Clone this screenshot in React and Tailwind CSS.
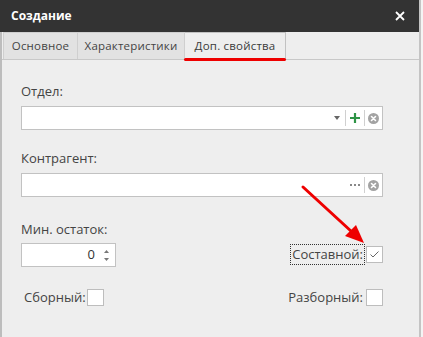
import React from 'react';

const ClearIcon = () => (
  <svg width="11" height="11" viewBox="0 0 11 11">
    <circle cx="5.5" cy="5.5" r="5.5" fill="#a3a3a3" />
    <path d="M3.5 3.5 L7.5 7.5 M7.5 3.5 L3.5 7.5" stroke="#fff" strokeWidth="1.6" strokeLinecap="round" />
  </svg>
);

const Checkbox = ({ checked }) => (
  <div className="w-[17px] h-[17px] bg-white border border-[#bdbdbd] flex items-center justify-center">
    {checked && (
      <svg width="11" height="9" viewBox="0 0 11 9">
        <path d="M1.5 4.5 L4 7 L9.5 1.5" fill="none" stroke="#666" strokeWidth="1" />
      </svg>
    )}
  </div>
);

export default function App() {
  return (
    <div className="relative w-[423px] h-[337px] overflow-hidden bg-[#f4f4f4] flex text-[13px] text-[#444]" style={{ fontFamily: '"Open Sans", "Noto Sans", sans-serif' }}>
      <div className="w-[421px] h-full flex flex-col border-r-2 border-[#c4c4c4]">
        <div className="h-[32px] shrink-0 bg-[#333333] flex items-center justify-between pl-[11px] pr-[14px]">
          <span className="text-white font-bold text-[12px]">Создание</span>
          <svg width="10" height="10" viewBox="0 0 10 10">
            <path d="M1 1 L9 9 M9 1 L1 9" stroke="#fff" strokeWidth="1.8" />
          </svg>
        </div>
        <div className="flex-1 flex flex-col bg-[#eeeeee] border-l-2 border-[#bdbdbd]">
          <div className="h-[28px] shrink-0 flex items-end pl-px pt-px border-b border-[#c8c8c8] text-[11.5px] tracking-[0.2px]">
            <div className="h-[27px] w-[75px] flex items-center justify-center bg-[#e2e2e2] border border-b-0 border-[#cfcfcf]">Основное</div>
            <div className="h-[27px] w-[107px] flex items-center justify-center bg-[#e2e2e2] border border-b-0 border-l-0 border-[#cfcfcf]">Характеристики</div>
            <div className="relative h-[27px] w-[101px] flex items-center justify-center bg-[#eeeeee] border border-b-0 border-l-0 border-[#c2c2c2] text-[#3a3a3a]">
              Доп. свойства
              <div className="absolute left-[-1px] right-[-1px] bottom-[-2px] h-[3px] bg-[#ee0000] rounded-sm" />
            </div>
          </div>
          <div className="flex-1 flex flex-col pl-[19px] pr-[36px]">
            <div className="mt-[22px] h-[18px] leading-[18px]">Отдел:</div>
            <div className="mt-[6px] h-[24px] bg-white border border-[#c2c2c2] flex items-center justify-end">
              <svg width="6" height="4" viewBox="0 0 6 4" className="mr-[5px]"><path d="M0 0 H6 L3 4 Z" fill="#666" /></svg>
              <div className="w-px h-[16px] bg-[#d0d0d0]" />
              <svg width="10" height="10" viewBox="0 0 10 10" className="mx-[4px]"><path d="M5 0 V10 M0 5 H10" stroke="#2e9446" strokeWidth="2.2" /></svg>
              <div className="w-px h-[16px] bg-[#d0d0d0]" />
              <div className="mx-[3px] flex"><ClearIcon /></div>
            </div>
            <div className="mt-[19px] h-[18px] leading-[18px]">Контрагент:</div>
            <div className="mt-[6px] h-[24px] bg-white border border-[#c2c2c2] flex items-center justify-end">
              <svg width="10" height="2" viewBox="0 0 10 2" className="mr-[4px]">
                <rect x="0" y="0" width="2" height="2" fill="#888" />
                <rect x="4" y="0" width="2" height="2" fill="#888" />
                <rect x="8" y="0" width="2" height="2" fill="#888" />
              </svg>
              <div className="w-px h-[16px] bg-[#d0d0d0]" />
              <div className="mx-[3px] flex"><ClearIcon /></div>
            </div>
            <div className="mt-[23px] flex items-end justify-between">
              <div className="flex flex-col">
                <div className="h-[18px] leading-[18px]">Мин. остаток:</div>
                <div className="mt-[5px] w-[95px] h-[24px] bg-white border border-[#c2c2c2] flex items-center justify-end pr-[6px]">
                  <span className="mr-[9px] text-[#333]">0</span>
                  <div className="flex flex-col gap-[5px]">
                    <svg width="5" height="3" viewBox="0 0 5 3"><path d="M0 3 H5 L2.5 0 Z" fill="#777" /></svg>
                    <svg width="5" height="3" viewBox="0 0 5 3"><path d="M0 0 H5 L2.5 3 Z" fill="#777" /></svg>
                  </div>
                </div>
              </div>
              <div className="flex items-center mb-[2px]">
                <span className="border border-dotted border-[#333] px-[1px] h-[21px] leading-[19px]">Составной:</span>
                <div className="ml-[1px]"><Checkbox checked /></div>
              </div>
            </div>
            <div className="mt-[21px] flex items-center justify-between">
              <div className="flex items-center pl-[3px]">
                <span className="mr-[1px]">Сборный:</span>
                <Checkbox />
              </div>
              <div className="flex items-center">
                <span className="mr-[3px]">Разборный:</span>
                <Checkbox />
              </div>
            </div>
          </div>
        </div>
      </div>
      <svg className="absolute left-0 top-0 pointer-events-none" width="423" height="337">
        <path d="M303 187 L352 232" stroke="#ee0000" strokeWidth="3" strokeLinecap="round" />
        <path d="M364 243 L345 236 L356 225 Z" fill="#ee0000" />
      </svg>
    </div>
  );
}
